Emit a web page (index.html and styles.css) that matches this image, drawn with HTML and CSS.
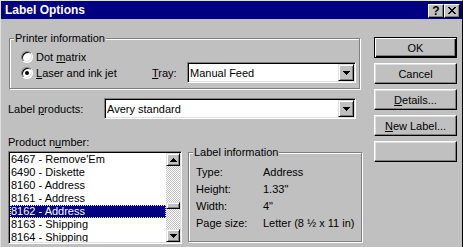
FILE: index.html
```html
<!DOCTYPE html>
<html>
<head>
	<meta charset="utf-8">
	<title>Label Options</title>
	<link rel="stylesheet" href="styles.css">
</head>
<body>
	<div class="window">
		<div class="titlebar">
			<span class="title">Label Options</span>
			<span class="caption-btns">
				<span class="cap-btn help">?</span>
				<span class="cap-btn close">
					<svg width="8" height="7" viewBox="0 0 8 7"><path d="M0 0h2v1H0zM6 0h2v1H6zM1 1h2v1H1zM5 1h2v1H5zM2 2h4v1H2zM3 3h2v1H3zM2 4h4v1H2zM1 5h2v1H1zM5 5h2v1H5zM0 6h2v1H0zM6 6h2v1H6z"/></svg>
				</span>
			</span>
		</div>

		<div class="dialog">
			<div class="main">
				<div class="group printer">
					<span class="group-title">Printer information</span>
					<div class="radio-row first">
						<span class="radio"></span>
						<span>Dot <u>m</u>atrix</span>
					</div>
					<div class="radio-row second">
						<span class="radio checked"></span>
						<span><u>L</u>aser and ink jet</span>
						<span class="tray-label"><u>T</u>ray:</span>
						<div class="combo tray-combo">
							<span class="combo-text">Manual Feed</span>
							<span class="drop-btn"><svg width="7" height="4" viewBox="0 0 7 4"><path d="M0 0h7v1H0zM1 1h5v1H1zM2 2h3v1H2zM3 3h1v1H3z"/></svg></span>
						</div>
					</div>
				</div>

				<div class="products-row">
					<span class="products-label">Label <u>p</u>roducts:</span>
					<div class="combo products-combo">
						<span class="combo-text">Avery standard</span>
						<span class="drop-btn"><svg width="7" height="4" viewBox="0 0 7 4"><path d="M0 0h7v1H0zM1 1h5v1H1zM2 2h3v1H2zM3 3h1v1H3z"/></svg></span>
					</div>
				</div>

				<div class="number-label">Product n<u>u</u>mber:</div>

				<div class="lower">
					<div class="listbox">
						<ul class="items">
							<li>6467 - Remove'Em</li>
							<li>6490 - Diskette</li>
							<li>8160 - Address</li>
							<li>8161 - Address</li>
							<li class="selected">8162 - Address</li>
							<li>8163 - Shipping</li>
							<li>8164 - Shipping</li>
						</ul>
						<div class="scrollbar">
							<span class="scroll-btn"><svg width="7" height="4" viewBox="0 0 7 4"><path d="M3 0h1v1H3zM2 1h3v1H2zM1 2h5v1H1zM0 3h7v1H0z"/></svg></span>
							<div class="track"><span class="thumb"></span></div>
							<span class="scroll-btn"><svg width="7" height="4" viewBox="0 0 7 4"><path d="M0 0h7v1H0zM1 1h5v1H1zM2 2h3v1H2zM3 3h1v1H3z"/></svg></span>
						</div>
					</div>

					<div class="group info">
						<span class="group-title">Label information</span>
						<div class="info-row"><span class="info-key">Type:</span><span>Address</span></div>
						<div class="info-row"><span class="info-key">Height:</span><span>1.33"</span></div>
						<div class="info-row"><span class="info-key">Width:</span><span>4"</span></div>
						<div class="info-row"><span class="info-key">Page size:</span><span>Letter (8 ½ x 11 in)</span></div>
					</div>
				</div>
			</div>

			<div class="buttons">
				<button class="btn default">OK</button>
				<button class="btn">Cancel</button>
				<button class="btn"><u>D</u>etails...</button>
				<button class="btn"><u>N</u>ew Label...</button>
				<button class="btn"></button>
			</div>
		</div>
	</div>
</body>
</html>
```

FILE: styles.css
```css
body {
	margin: 0;
	padding: 0;
	background-color: #c0c0c0;
	font-family: "Liberation Sans", Arial, sans-serif;
	font-size: 11px;
	color: #000;
}
u {
	text-decoration: underline;
	text-underline-offset: 1px;
}
.window {
	width: 463px;
	height: 247px;
	box-sizing: border-box;
	background-color: #c0c0c0;
	border-top: 1px solid #dfdfdf;
	border-left: 1px solid #dfdfdf;
	border-right: 1px solid #000;
	overflow: hidden;
}
.titlebar {
	height: 18px;
	background-color: #000080;
	display: flex;
	align-items: center;
	justify-content: space-between;
	padding: 0 2px 0 4px;
}
.title {
	color: #fff;
	font-weight: bold;
	font-size: 12px;
}
.caption-btns {
	display: flex;
	margin-top: 1px;
}
.cap-btn {
	width: 16px;
	height: 14px;
	box-sizing: border-box;
	background-color: #c0c0c0;
	border: 1px solid;
	border-color: #fff #000 #000 #fff;
	box-shadow: inset -1px -1px #808080;
	display: flex;
	align-items: center;
	justify-content: center;
	font-weight: bold;
	font-size: 12px;
	line-height: 12px;
}
.dialog {
	display: flex;
	padding-left: 7px;
}
.main {
	width: 354px;
}
.group {
	position: relative;
	box-sizing: border-box;
	border: 1px solid #808080;
	box-shadow: inset 1px 1px #fff, 1px 1px #fff;
}
.group-title {
	position: absolute;
	top: -7px;
	left: 4px;
	padding: 0 1px;
	line-height: 13px;
	background-color: #c0c0c0;
}
.printer {
	margin: 19px 0 0 1px;
	width: 351px;
	padding: 10px 3px 5px 11px;
}
.radio-row {
	display: flex;
	align-items: center;
}
.radio-row.first {
	height: 15px;
}
.radio-row.second {
	height: 21px;
	margin-top: -2px;
}
.radio {
	width: 12px;
	height: 12px;
	box-sizing: border-box;
	border-radius: 50%;
	background-color: #fff;
	border: 1px solid;
	border-color: #808080 #fff #fff #808080;
	box-shadow: inset 1px 1px #000, inset -1px -1px #dfdfdf;
	margin-right: 3px;
	display: flex;
	align-items: center;
	justify-content: center;
}
.radio.checked::after {
	content: "";
	width: 4px;
	height: 4px;
	border-radius: 50%;
	background-color: #000;
}
.tray-label {
	margin-left: auto;
	width: 35px;
}
.combo {
	height: 21px;
	box-sizing: border-box;
	background-color: #fff;
	border: 1px solid;
	border-color: #808080 #fff #fff #808080;
	box-shadow: inset 1px 1px #000, inset -1px -1px #dfdfdf;
	padding: 1px;
	display: flex;
	align-items: center;
}
.combo-text {
	flex: 1;
	padding-left: 1px;
}
.tray-combo {
	width: 169px;
}
.drop-btn, .scroll-btn {
	box-sizing: border-box;
	background-color: #c0c0c0;
	border: 1px solid;
	border-color: #dfdfdf #000 #000 #dfdfdf;
	box-shadow: inset 1px 1px #fff, inset -1px -1px #808080;
	display: flex;
	align-items: center;
	justify-content: center;
}
.drop-btn {
	width: 16px;
	height: 17px;
}
.products-row {
	display: flex;
	align-items: center;
	margin-top: 9px;
}
.products-label {
	width: 96px;
}
.products-combo {
	width: 252px;
}
.number-label {
	margin-top: 17px;
	line-height: 13px;
	margin-bottom: 2px;
}
.lower {
	display: flex;
	gap: 6px;
	align-items: flex-start;
}
.listbox {
	width: 174px;
	height: 93px;
	box-sizing: border-box;
	background-color: #fff;
	border: 1px solid;
	border-color: #808080 #fff #fff #808080;
	box-shadow: inset 1px 1px #000, inset -1px -1px #dfdfdf;
	padding: 1px;
	display: flex;
	overflow: hidden;
}
.items {
	list-style: none;
	margin: 0;
	padding: 0;
	flex: 1;
	overflow: hidden;
}
.items li {
	height: 13px;
	line-height: 13px;
	padding-left: 1px;
	white-space: nowrap;
}
.items li.selected {
	background-color: #000080;
	color: #fff;
	outline: 1px dotted #ffff80;
	outline-offset: -1px;
}
.scrollbar {
	width: 14px;
	display: flex;
	flex-direction: column;
}
.scroll-btn {
	height: 13px;
}
.track {
	flex: 1;
	background: repeating-conic-gradient(#fff 0 25%, #c0c0c0 0 50%) 0 0 / 2px 2px;
}
.thumb {
	display: block;
	height: 7px;
	margin-top: 36px;
	box-sizing: border-box;
	background-color: #c0c0c0;
	border: 1px solid;
	border-color: #dfdfdf #000 #000 #dfdfdf;
	box-shadow: inset 1px 1px #fff, inset -1px -1px #808080;
}
.info {
	margin-top: 1px;
	width: 174px;
	height: 90px;
	padding: 10px 0 0 7px;
}
.info-row {
	display: flex;
	height: 17px;
	align-items: center;
	white-space: nowrap;
}
.info-key {
	width: 67px;
}
.buttons {
	margin: 18px 0 0 12px;
	display: flex;
	flex-direction: column;
	gap: 5px;
}
.btn {
	width: 83px;
	height: 21px;
	box-sizing: border-box;
	padding: 0;
	font-family: inherit;
	font-size: 11px;
	color: #000;
	background-color: #c0c0c0;
	border: 1px solid;
	border-color: #fff #000 #000 #fff;
	box-shadow: inset -1px -1px #808080, inset 1px 1px #dfdfdf;
	border-radius: 0;
}
.btn.default {
	border-color: #000;
	box-shadow: inset 1px 1px #fff, inset -1px -1px #000, inset -2px -2px #808080;
}
```
